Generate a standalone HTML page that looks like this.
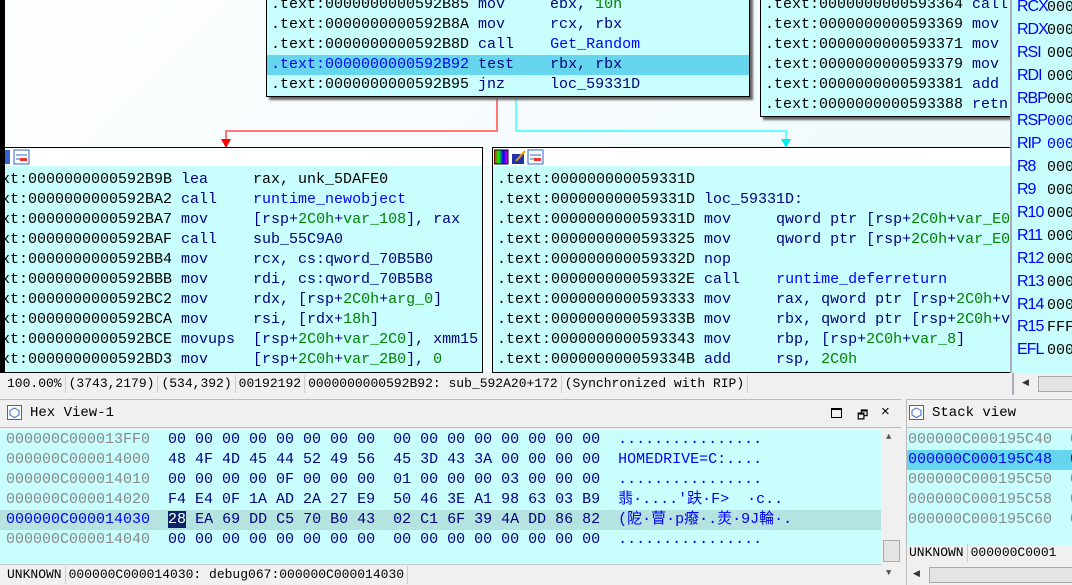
<!DOCTYPE html>
<html><head><meta charset="utf-8"><style>
*{margin:0;padding:0;box-sizing:border-box}
body{width:1072px;height:585px;overflow:hidden;background:#f0f0f0;position:relative;font-family:"Liberation Mono",monospace;}
.a{position:absolute}
.m{font-family:"Liberation Mono","Noto Sans CJK SC",monospace;font-size:15px;line-height:20px;color:#000}
.k{color:#000080}.b{color:#0000ff}.g{color:#008000}.n{color:#000}
.row{height:20px;padding-left:4px;white-space:pre;overflow:hidden}
.hl{background:#66d6ee}
.blk{position:absolute;background:#c8fffe;border:1px solid #000;overflow:hidden}
.hdr{position:absolute;background:#fff;border:1px solid #000;}
.st{font-family:"Liberation Mono",monospace;font-size:13px;color:#000;white-space:pre;line-height:20px}
.sep{display:inline-block;border-left:1px solid #ccc;height:18px;vertical-align:middle;margin:0 3px}
.reg{height:22.9px;line-height:22.9px;font-size:15px;white-space:pre}
.rn{font-family:"Liberation Sans",sans-serif;font-size:16px;color:#0000ff;display:inline-block;width:30px;letter-spacing:-1px}
</style></head><body>
<div class="a" style="left:0;top:0;width:1010px;height:372px;background:linear-gradient(135deg,#fdfeff,#eef9fc)"></div>
<svg class="a" style="left:0;top:0" width="1010" height="372">
<polyline points="497,96 497,131 226,131 226,142" fill="none" stroke="#f77" stroke-width="2"/>
<polygon points="221,139 231,139 226,148" fill="#f00"/>
<polyline points="516,96 516,131 786,131 786,142" fill="none" stroke="#6ff" stroke-width="2"/>
<polygon points="781,139 791,139 786,148" fill="#0ee"/>
</svg>
<div class="blk m" style="left:266px;top:-6px;width:484px;height:103px;box-shadow:3px 3px 2px #666"><div class="row">.text:0000000000592B85 <span class="k">mov     ebx, </span><span class="g">10h</span></div><div class="row">.text:0000000000592B8A <span class="k">mov     rcx, rbx</span></div><div class="row">.text:0000000000592B8D <span class="k">call    </span><span class="b">Get_Random</span></div><div class="row hl"><span class="b">.text:0000000000592B92</span> <span class="k">test    rbx, rbx</span></div><div class="row">.text:0000000000592B95 <span class="k">jnz     loc_59331D</span></div></div>
<div class="blk m" style="left:760px;top:-6px;width:256px;height:123px;box-shadow:3px 3px 2px #666"><div class="row">.text:0000000000593364 <span class="k">call</span></div><div class="row">.text:0000000000593369 <span class="k">mov</span></div><div class="row">.text:0000000000593371 <span class="k">mov</span></div><div class="row">.text:0000000000593379 <span class="k">mov</span></div><div class="row">.text:0000000000593381 <span class="k">add</span></div><div class="row">.text:0000000000593388 <span class="k">retn</span></div></div>
<div class="hdr" style="left:-2px;top:147px;width:485px;height:20px"></div>
<svg class="a" style="left:4px;top:149px" width="28" height="16"><rect x="0" y="1" width="6" height="14" fill="#36c"/><rect x="10" y="1" width="15" height="14" fill="#fff" stroke="#36c"/><path d="M12 6h11M12 10h11" stroke="#36c"/><rect x="16" y="9" width="7" height="3" fill="#e33"/></svg>
<div class="blk m" style="left:-2px;top:166px;width:485px;height:207px;border-top:none;padding-top:4px"><div style="margin-left:-2px"><div class="row">xt:0000000000592B9B <span class="k">lea     </span>rax, unk_5DAFE0</div><div class="row">xt:0000000000592BA2 <span class="k">call    </span><span class="b">runtime_newobject</span></div><div class="row">xt:0000000000592BA7 <span class="k">mov     [rsp+</span><span class="g">2C0h</span><span class="k">+</span><span class="g">var_108</span><span class="k">], rax</span></div><div class="row">xt:0000000000592BAF <span class="k">call    sub_55C9A0</span></div><div class="row">xt:0000000000592BB4 <span class="k">mov     rcx, cs:qword_70B5B0</span></div><div class="row">xt:0000000000592BBB <span class="k">mov     rdi, cs:qword_70B5B8</span></div><div class="row">xt:0000000000592BC2 <span class="k">mov     rdx, [rsp+</span><span class="g">2C0h</span><span class="k">+</span><span class="g">arg_0</span><span class="k">]</span></div><div class="row">xt:0000000000592BCA <span class="k">mov     rsi, [rdx+</span><span class="g">18h</span><span class="k">]</span></div><div class="row">xt:0000000000592BCE <span class="k">movups  [rsp+</span><span class="g">2C0h</span><span class="k">+</span><span class="g">var_2C0</span><span class="k">], xmm15</span></div><div class="row">xt:0000000000592BD3 <span class="k">mov     [rsp+</span><span class="g">2C0h</span><span class="k">+</span><span class="g">var_2B0</span><span class="k">], </span><span class="g">0</span></div></div></div>
<div class="a" style="left:0;top:0;width:5px;height:372px;background:#000"></div>
<div class="hdr" style="left:492px;top:147px;width:525px;height:20px"></div>
<svg class="a" style="left:494px;top:149px" width="60" height="16"><defs><linearGradient id="rg" x1="0" x2="1"><stop offset="0" stop-color="#f00"/><stop offset=".33" stop-color="#0f0"/><stop offset=".66" stop-color="#00f"/><stop offset="1" stop-color="#f0f"/></linearGradient></defs><rect x="0" y="1" width="14" height="14" fill="url(#rg)" stroke="#000"/><rect x="18" y="5" width="12" height="10" fill="#23a"/><path d="M22 12 L31 2" stroke="#e90" stroke-width="2"/><rect x="34" y="1" width="15" height="14" fill="#fff" stroke="#36c"/><path d="M36 6h11M36 10h11" stroke="#36c"/><rect x="40" y="9" width="7" height="3" fill="#e33"/></svg>
<div class="blk m" style="left:492px;top:166px;width:525px;height:207px;border-top:none;padding-top:4px"><div class="row">.text:000000000059331D</div><div class="row">.text:000000000059331D <span class="k">loc_59331D:</span></div><div class="row">.text:000000000059331D <span class="k">mov     qword ptr [rsp+</span><span class="g">2C0h</span><span class="k">+</span><span class="g">var_E0</span></div><div class="row">.text:0000000000593325 <span class="k">mov     qword ptr [rsp+</span><span class="g">2C0h</span><span class="k">+</span><span class="g">var_E0</span></div><div class="row">.text:000000000059332D <span class="k">nop</span></div><div class="row">.text:000000000059332E <span class="k">call    </span><span class="b">runtime_deferreturn</span></div><div class="row">.text:0000000000593333 <span class="k">mov     rax, qword ptr [rsp+</span><span class="g">2C0h</span><span class="k">+v</span></div><div class="row">.text:000000000059333B <span class="k">mov     rbx, qword ptr [rsp+</span><span class="g">2C0h</span><span class="k">+v</span></div><div class="row">.text:0000000000593343 <span class="k">mov     rbp, [rsp+</span><span class="g">2C0h</span><span class="k">+</span><span class="g">var_8</span><span class="k">]</span></div><div class="row">.text:000000000059334B <span class="k">add     rsp, </span><span class="g">2C0h</span></div></div>
<div class="a st" style="left:0;top:373px;width:1010px;height:22px;background:#f0f0f0;padding-left:7px;line-height:22px">100.00%<span class="sep"></span>(3743,2179)<span class="sep"></span>(534,392)<span class="sep"></span>00192192<span class="sep"></span>0000000000592B92: sub_592A20+172<span class="sep"></span>(Synchronized with RIP)<span class="sep"></span></div>
<div class="a" style="left:1010px;top:0;width:62px;height:373px;background:#c8fffe;border-left:2px solid #aab;padding-left:5px">
<div class="reg" style="margin-top:-4px"><span class="rn">RCX</span>000</div>
<div class="reg"><span class="rn">RDX</span>000</div>
<div class="reg"><span class="rn">RSI</span>000</div>
<div class="reg"><span class="rn">RDI</span>000</div>
<div class="reg"><span class="rn">RBP</span>000</div>
<div class="reg" style="color:#00f"><span class="rn">RSP</span>000</div>
<div class="reg" style="color:#00f"><span class="rn">RIP</span>000</div>
<div class="reg"><span class="rn">R8</span>000</div>
<div class="reg"><span class="rn">R9</span>000</div>
<div class="reg"><span class="rn">R10</span>000</div>
<div class="reg"><span class="rn">R11</span>000</div>
<div class="reg"><span class="rn">R12</span>000</div>
<div class="reg"><span class="rn">R13</span>000</div>
<div class="reg"><span class="rn">R14</span>000</div>
<div class="reg"><span class="rn">R15</span>FFF</div>
<div class="reg"><span class="rn">EFL</span>000</div>
</div>
<div class="a" style="left:1012px;top:373px;width:60px;height:22px;background:#f0f0f0;border-left:2px solid #aab"><span class="a" style="left:8px;top:5px;font-size:9px;color:#333">◀</span><div class="a" style="left:24px;top:3px;width:40px;height:16px;background:#e4e4e4;border:1px solid #aaa"></div></div>
<div class="a" style="left:0;top:399px;width:901px;height:29px;background:#f0f0f0;border-top:1px solid #bbb;border-bottom:1px solid #bbb"></div>
<svg class="a" style="left:7px;top:405px" width="16" height="16"><rect x=".5" y=".5" width="14" height="14" fill="#fff" stroke="#36c"/><polygon points="7.5,3 12,5.5 12,10 7.5,12.5 3,10 3,5.5" fill="none" stroke="#36c"/></svg>
<div class="a st" style="left:30px;top:403px;font-size:14px">Hex View-1</div>
<div class="a" style="left:831px;top:408px;width:11px;height:10px;border:1px solid #000;border-top-width:2px"></div>
<div class="a" style="left:857px;top:406px;font-size:12px;font-family:'Liberation Sans',sans-serif">🗗</div>
<div class="a" style="left:881px;top:403px;font-size:15px;font-family:'Liberation Sans',sans-serif">×</div>
<div class="a m" style="left:0;top:430px;width:881px;height:133px;background:#c8fffe;color:#000080"><div class="row" style="padding-left:6px"><span style="color:#888">000000C000013FF0</span>  00 00 00 00 00 00 00 00  00 00 00 00 00 00 00 00  <span class="b">................</span></div><div class="row" style="padding-left:6px"><span style="color:#888">000000C000014000</span>  48 4F 4D 45 44 52 49 56  45 3D 43 3A 00 00 00 00  <span class="b">HOMEDRIVE=C:....</span></div><div class="row" style="padding-left:6px"><span style="color:#888">000000C000014010</span>  00 00 00 00 0F 00 00 00  01 00 00 00 03 00 00 00  <span class="b">................</span></div><div class="row" style="padding-left:6px"><span style="color:#888">000000C000014020</span>  F4 E4 0F 1A AD 2A 27 E9  50 46 3E A1 98 63 03 B9  <span class="b">翡·....'趺·F&gt;  ·c..</span></div><div class="row" style="padding-left:6px;background:#b5e4e0"><span class="b">000000C000014030</span>  <span style="background:#0a246a;color:#fff">28</span> EA 69 DD C5 70 B0 43  02 C1 6F 39 4A DD 86 82  <span class="b">(阸·萺·p癈·.羙·9J輪·.</span></div><div class="row" style="padding-left:6px"><span style="color:#888">000000C000014040</span>  00 00 00 00 00 00 00 00  00 00 00 00 00 00 00 00  <span class="b">................</span></div></div>
<div class="a" style="left:881px;top:430px;width:20px;height:155px;background:#f0f0f0">
<span class="a" style="left:5px;top:2px;font-size:9px;color:#555">▲</span>
<span class="a" style="left:5px;top:138px;font-size:9px;color:#555">▼</span>
<div class="a" style="left:2px;top:110px;width:17px;height:22px;background:#e4e4e4;border:1px solid #aaa"></div></div>
<div class="a st" style="left:0;top:564px;width:881px;height:21px;background:#f0f0f0;padding-left:7px;border-top:1px solid #ccc">UNKNOWN<span class="sep"></span>000000C000014030: debug067:000000C000014030<span class="sep"></span></div>
<div class="a" style="left:906px;top:399px;width:166px;height:186px;background:#f0f0f0;border-left:1px solid #bbb"></div>
<div class="a" style="left:906px;top:399px;width:166px;height:29px;border-top:1px solid #bbb;border-bottom:1px solid #bbb"></div>
<svg class="a" style="left:909px;top:405px" width="16" height="16"><rect x=".5" y=".5" width="14" height="14" fill="#fff" stroke="#36c"/><polygon points="7.5,3 12,5.5 12,10 7.5,12.5 3,10 3,5.5" fill="none" stroke="#36c"/></svg>
<div class="a st" style="left:932px;top:403px;font-size:14px">Stack view</div>
<div class="a m" style="left:907px;top:430px;width:165px;height:115px;background:#c8fffe;color:#888"><div class="row" style="padding-left:1px">000000C000195C40  0</div><div class="row hl" style="padding-left:1px;color:#00f">000000C000195C48  0</div><div class="row" style="padding-left:1px">000000C000195C50  0</div><div class="row" style="padding-left:1px">000000C000195C58  0</div><div class="row" style="padding-left:1px">000000C000195C60  0</div></div>
<div class="a st" style="left:909px;top:543px;">UNKNOWN<span class="sep"></span>000000C0001</div>
<div class="a" style="left:907px;top:565px;width:165px;height:20px;background:#f0f0f0"><span class="a" style="left:6px;top:4px;font-size:9px;color:#333">◀</span><div class="a" style="left:22px;top:2px;width:150px;height:16px;background:#e4e4e4;border:1px solid #aaa"></div></div>
</body></html>
